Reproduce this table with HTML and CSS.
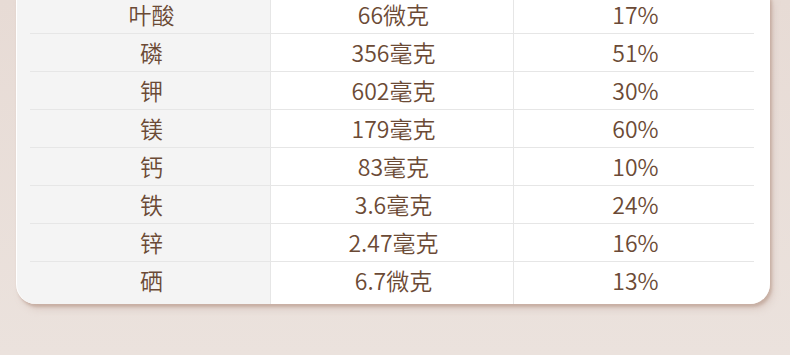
FILE: index.html
```html
<!DOCTYPE html>
<html lang="zh">
<head>
<meta charset="utf-8">
<link rel="stylesheet" href="styles.css">
</head>
<body>
<div class="page">
  <div class="card">
    <div class="table">
      <div class="row"><div class="cell">叶酸</div><div class="cell">66微克</div><div class="cell">17%</div></div>
      <div class="row"><div class="cell">磷</div><div class="cell">356毫克</div><div class="cell">51%</div></div>
      <div class="row"><div class="cell">钾</div><div class="cell">602毫克</div><div class="cell">30%</div></div>
      <div class="row"><div class="cell">镁</div><div class="cell">179毫克</div><div class="cell">60%</div></div>
      <div class="row"><div class="cell">钙</div><div class="cell">83毫克</div><div class="cell">10%</div></div>
      <div class="row"><div class="cell">铁</div><div class="cell">3.6毫克</div><div class="cell">24%</div></div>
      <div class="row"><div class="cell">锌</div><div class="cell">2.47毫克</div><div class="cell">16%</div></div>
      <div class="row last"><div class="cell">硒</div><div class="cell">6.7微克</div><div class="cell">13%</div></div>
    </div>
  </div>
</div>
</body>
</html>
```
FILE: styles.css
```css
html, body {
  margin: 0;
  padding: 0;
}
body {
  width: 790px;
  height: 355px;
  overflow: hidden;
  background: linear-gradient(180deg, #e7dbd5 0%, #ebe2dd 100%);
  font-family: "Noto Sans CJK SC", "Noto Sans", sans-serif;
}
.page {
  padding: 0 20px 0 16px;
}
.card {
  box-sizing: border-box;
  margin-top: -4px;
  width: 754px;
  border-left: 1px solid #ffffff;
  border-radius: 0 0 20px 20px;
  background: linear-gradient(to right, #f4f4f4 253px, #ffffff 253px);
  box-shadow: 2px 3px 3px rgba(170, 135, 118, 0.45), 4px 6px 6px rgba(200, 175, 165, 0.35);
  padding: 0 16px 0 13px;
}
.table {
  display: flex;
  flex-direction: column;
}
.row {
  display: grid;
  grid-template-columns: 240px 243px 241px;
  border-bottom: 1px solid #e6e6e6;
}
.row.last {
  border-bottom: none;
}
.cell {
  height: 37px;
  display: flex;
  align-items: center;
  justify-content: center;
  font-size: 23px;
  font-weight: 350;
  color: #6b4a35;
  padding-left: 3px;
  padding-bottom: 2px;
  box-sizing: border-box;
}
.row.last .cell {
  height: 42px;
  padding-bottom: 7px;
}
.cell + .cell {
  border-left: 1px solid #e6e6e6;
}
```
